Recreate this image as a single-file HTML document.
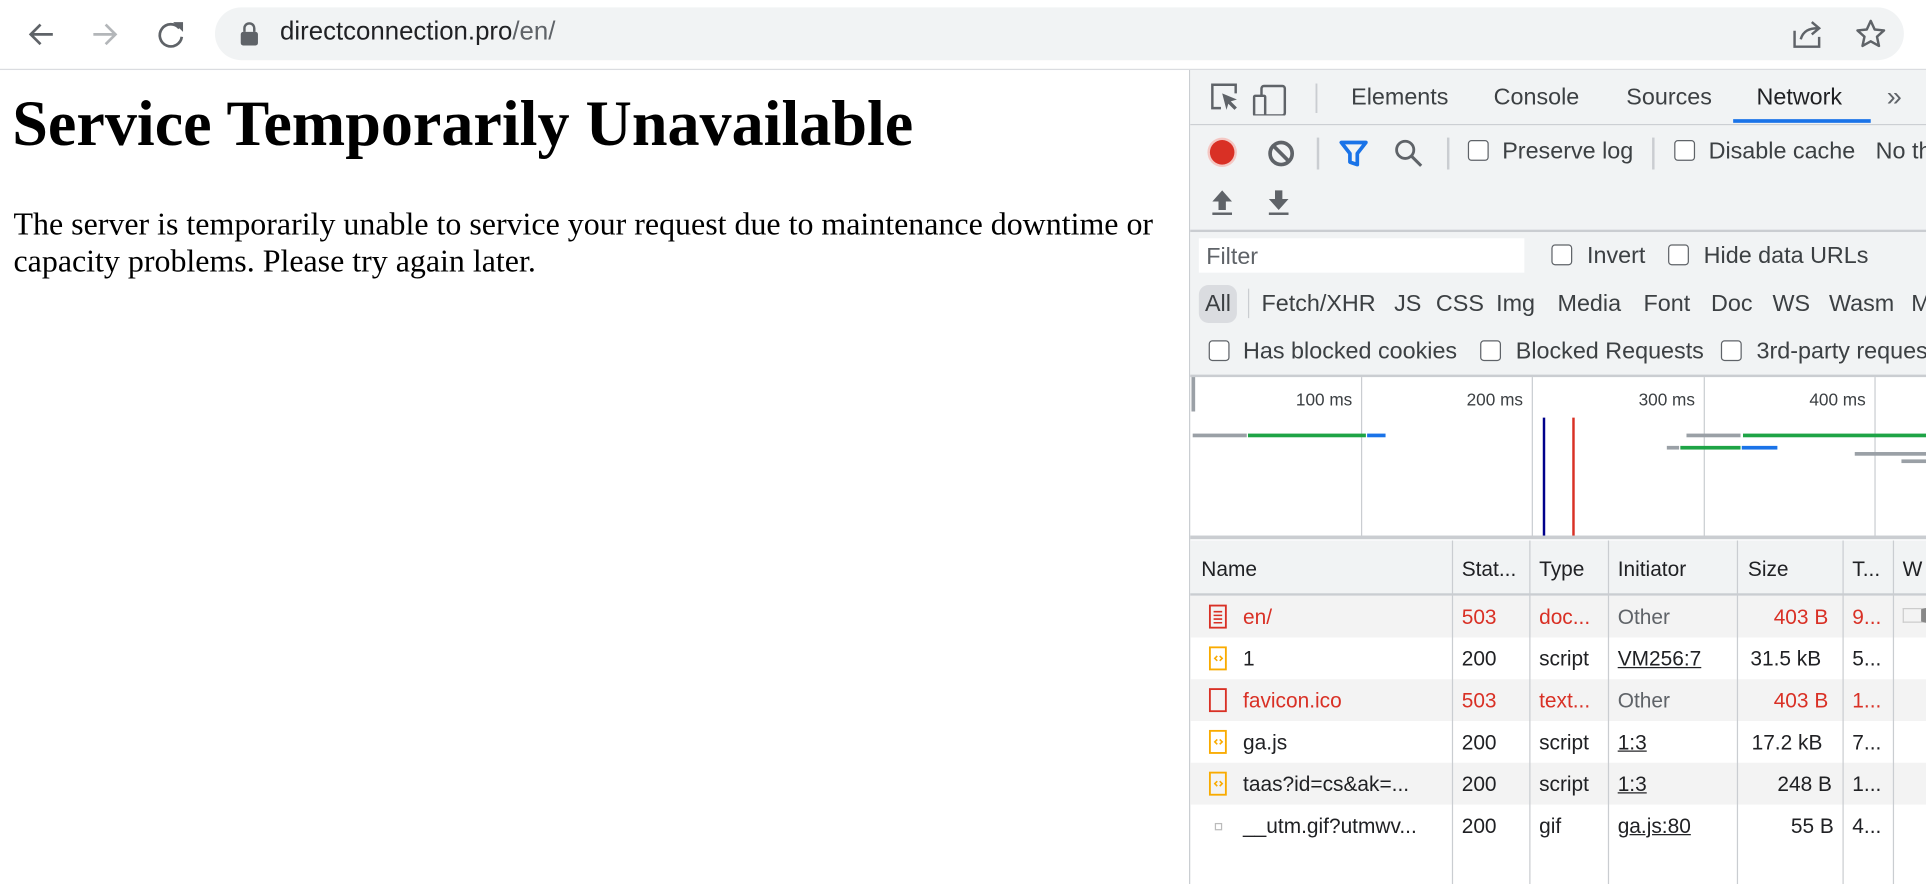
<!DOCTYPE html>
<html><head><meta charset="utf-8"><style>
html,body{margin:0;padding:0;width:1926px;height:884px;overflow:hidden;background:#fff}
#w{position:absolute;left:0;top:0;width:1568px;height:720px;transform:scale(1.22832);transform-origin:0 0;font-family:"Liberation Sans",sans-serif;color:#202124}
.a{position:absolute}
.t{position:absolute;font-size:17px;white-space:nowrap}
.b{font-size:19px}
.cb{position:absolute;width:15px;height:15px;border:1.5px solid #5f6368;border-radius:3px;background:#fff}
.red{color:#d93025}
.u{text-decoration:underline}
.vl{position:absolute;width:1px;background:#cacdd1}
</style></head><body><div id="w">
<div class="a" style="left:0;top:0;width:1568px;height:56px;background:#fff;border-bottom:1px solid #dadce0"></div>
<svg class="a" style="left:20px;top:14px" width="140" height="28" viewBox="0 0 140 28">
<path d="M23 14H5M13 6l-8 8 8 8" stroke="#5f6368" stroke-width="2.2" fill="none"/>
<path d="M56 14h18M66 6l8 8-8 8" stroke="#b3b6b9" stroke-width="2.2" fill="none"/>
<path d="M126 9a9 9 0 1 0 2 7" stroke="#5f6368" stroke-width="2.2" fill="none"/><path d="M121 4h8v8z" fill="#5f6368"/>
</svg>
<div class="a" style="left:175px;top:6px;width:1375px;height:43px;background:#f1f3f4;border-radius:22px"></div>
<svg class="a" style="left:195px;top:18px" width="16" height="20" viewBox="0 0 16 20"><rect x="1" y="8" width="14" height="11" rx="2" fill="#5f6368"/><path d="M4 8V5a4 4 0 0 1 8 0v3" stroke="#5f6368" stroke-width="2" fill="none"/></svg>
<div class="t" style="left:228px;top:14px;font-size:21px;color:#202124">directconnection.pro<span style="color:#5f6368">/en/</span></div>
<svg class="a" style="left:1458px;top:15px" width="80" height="26" viewBox="0 0 80 26">
<path d="M3 10v13h20v-8M8 17c2-7 7-9 14-9M17 3l6 5-6 5" stroke="#5f6368" stroke-width="2" fill="none"/>
<path d="M65 2l3.2 7 7.6.8-5.7 5.1 1.6 7.5L65 18.6l-6.7 3.8 1.6-7.5-5.7-5.1 7.6-.8z" stroke="#5f6368" stroke-width="2" fill="none" stroke-linejoin="round"/>
</svg>
<div class="a" style="left:10px;top:71px;font-family:'Liberation Serif',serif;font-weight:bold;font-size:52.2px;white-space:nowrap;color:#000">Service Temporarily Unavailable</div>
<div class="a" style="left:11px;top:168px;width:950px;font-family:'Liberation Serif',serif;font-size:26px;line-height:30px;color:#000">The server is temporarily unable to service your request due to maintenance downtime or capacity problems. Please try again later.</div>
<div class="a" style="left:968px;top:57px;width:600px;height:663px;background:#fff;border-left:1px solid #cacdd1"></div>
<div class="a" style="left:969px;top:57px;width:599px;height:44px;background:#f1f3f4;border-bottom:1px solid #cacdd1"></div>
<svg class="a" style="left:984px;top:66px" width="90" height="28" viewBox="0 0 90 28">
<path d="M10 22H3V3h19v7" stroke="#5f6368" stroke-width="2" fill="none"/><path d="M11 10l12 5-5 1.5 5 5-2 2-5-5-1.5 5z" fill="#5f6368"/>
<rect x="43" y="4" width="19" height="24" rx="2" stroke="#5f6368" stroke-width="2" fill="none"/><rect x="37" y="12" width="9" height="16" rx="1" stroke="#5f6368" stroke-width="2" fill="#f1f3f4"/>
<rect x="87" y="2" width="1.5" height="24" fill="#cacdd1"/></svg>
<div class="t b" style="left:1100px;top:69px;color:#3c4043">Elements</div>
<div class="t b" style="left:1216px;top:69px;color:#3c4043">Console</div>
<div class="t b" style="left:1324px;top:69px;color:#3c4043">Sources</div>
<div class="t b" style="left:1430px;top:69px;color:#202124">Network</div>
<div class="a" style="left:1411px;top:97px;width:112px;height:3px;background:#1a73e8"></div>
<div class="t" style="left:1536px;top:66px;font-size:22px;color:#5f6368">»</div>
<div class="a" style="left:969px;top:102px;width:599px;height:85px;background:#f1f3f4;border-bottom:2px solid #cacdd1"></div>
<div class="a" style="left:985px;top:114px;width:20px;height:20px;border-radius:50%;background:#d93025;box-shadow:0 0 0 2px #f4c7c3"></div>
<svg class="a" style="left:1031px;top:113px" width="24" height="24" viewBox="0 0 24 24"><circle cx="12" cy="12" r="9" stroke="#5f6368" stroke-width="3" fill="none"/><path d="M6 6l12 12" stroke="#5f6368" stroke-width="3"/></svg>
<div class="a" style="left:1072px;top:112px;width:1.5px;height:26px;background:#cacdd1"></div>
<svg class="a" style="left:1090px;top:113px" width="24" height="24" viewBox="0 0 24 24"><path d="M2 3h20l-7 9v9l-6-2v-7z" stroke="#1a73e8" stroke-width="3" fill="none" stroke-linejoin="round"/></svg>
<svg class="a" style="left:1134px;top:112px" width="26" height="26" viewBox="0 0 26 26"><circle cx="10" cy="10" r="7" stroke="#5f6368" stroke-width="2.3" fill="none"/><path d="M15 15l8 8" stroke="#5f6368" stroke-width="2.5"/></svg>
<div class="a" style="left:1178px;top:112px;width:1.5px;height:26px;background:#cacdd1"></div>
<div class="cb" style="left:1195px;top:114px"></div><div class="t b" style="left:1223px;top:113px;color:#3c4043">Preserve log</div>
<div class="a" style="left:1345px;top:112px;width:1.5px;height:26px;background:#cacdd1"></div>
<div class="cb" style="left:1363px;top:114px"></div><div class="t b" style="left:1391px;top:113px;color:#3c4043">Disable cache</div>
<div class="t b" style="left:1527px;top:113px;color:#3c4043">No th</div>
<svg class="a" style="left:985px;top:153px" width="70" height="24" viewBox="0 0 70 24"><path d="M10 2l8 9h-5v7H7v-7H2z" fill="#5f6368"/><rect x="2" y="20" width="16" height="2" fill="#5f6368"/><path d="M56 18l8-9h-5V2h-6v7h-5z" fill="#5f6368"/><rect x="48" y="20" width="16" height="2" fill="#5f6368"/></svg>
<div class="a" style="left:969px;top:189px;width:599px;height:116px;background:#f1f3f4;border-bottom:2px solid #cacdd1"></div>
<div class="a" style="left:976px;top:194px;width:265px;height:28px;background:#fff"></div>
<div class="t b" style="left:982px;top:199px;color:#5f6368">Filter</div>
<div class="cb" style="left:1263px;top:199px"></div><div class="t b" style="left:1292px;top:198px;color:#3c4043">Invert</div>
<div class="cb" style="left:1358px;top:199px"></div><div class="t b" style="left:1387px;top:198px;color:#3c4043">Hide data URLs</div>
<div class="a" style="left:976px;top:232px;width:31px;height:31px;border-radius:8px;background:#dadce0"></div>
<div class="t b" style="left:981px;top:237px;color:#3c4043">All</div>
<div class="a" style="left:1016px;top:235px;width:1px;height:24px;background:#cacdd1"></div>
<div class="t b" style="left:1027px;top:237px;color:#3c4043">Fetch/XHR</div>
<div class="t b" style="left:1135px;top:237px;color:#3c4043">JS</div>
<div class="t b" style="left:1169px;top:237px;color:#3c4043">CSS</div>
<div class="t b" style="left:1218px;top:237px;color:#3c4043">Img</div>
<div class="t b" style="left:1268px;top:237px;color:#3c4043">Media</div>
<div class="t b" style="left:1338px;top:237px;color:#3c4043">Font</div>
<div class="t b" style="left:1393px;top:237px;color:#3c4043">Doc</div>
<div class="t b" style="left:1443px;top:237px;color:#3c4043">WS</div>
<div class="t b" style="left:1489px;top:237px;color:#3c4043">Wasm</div>
<div class="t b" style="left:1556px;top:237px;color:#3c4043">M</div>
<div class="cb" style="left:984px;top:277px"></div><div class="t b" style="left:1012px;top:276px;color:#3c4043">Has blocked cookies</div>
<div class="cb" style="left:1205px;top:277px"></div><div class="t b" style="left:1234px;top:276px;color:#3c4043">Blocked Requests</div>
<div class="cb" style="left:1401px;top:277px"></div><div class="t b" style="left:1430px;top:276px;color:#3c4043">3rd-party reques</div>
<div class="a" style="left:970px;top:307px;width:3px;height:28px;background:#9aa0a6"></div>
<div class="vl" style="left:1108px;top:307px;height:130px"></div>
<div class="vl" style="left:1247px;top:307px;height:130px"></div>
<div class="vl" style="left:1387px;top:307px;height:130px"></div>
<div class="vl" style="left:1526px;top:307px;height:130px"></div>
<div class="t" style="left:1055px;top:317px;font-size:14px;color:#3c4043">100 ms</div>
<div class="t" style="left:1194px;top:317px;font-size:14px;color:#3c4043">200 ms</div>
<div class="t" style="left:1334px;top:317px;font-size:14px;color:#3c4043">300 ms</div>
<div class="t" style="left:1473px;top:317px;font-size:14px;color:#3c4043">400 ms</div>
<div class="a" style="left:971px;top:353px;width:44px;height:3px;background:#9aa0a6"></div>
<div class="a" style="left:1016px;top:353px;width:96px;height:3px;background:#1ea446"></div>
<div class="a" style="left:1113px;top:353px;width:15px;height:3px;background:#1a73e8"></div>
<div class="a" style="left:1256px;top:340px;width:1.5px;height:98px;background:#00008b"></div>
<div class="a" style="left:1280px;top:340px;width:1.5px;height:98px;background:#d93025"></div>
<div class="a" style="left:1373px;top:353px;width:44px;height:3px;background:#9aa0a6"></div>
<div class="a" style="left:1419px;top:353px;width:149px;height:3px;background:#1ea446"></div>
<div class="a" style="left:1357px;top:363px;width:10px;height:3px;background:#9aa0a6"></div>
<div class="a" style="left:1368px;top:363px;width:49px;height:3px;background:#1ea446"></div>
<div class="a" style="left:1418px;top:363px;width:29px;height:3px;background:#1a73e8"></div>
<div class="a" style="left:1510px;top:368px;width:58px;height:3px;background:#9aa0a6"></div>
<div class="a" style="left:1548px;top:374px;width:20px;height:3px;background:#9aa0a6"></div>
<div class="a" style="left:969px;top:436px;width:599px;height:3px;background:#cacdd1"></div>
<div class="a" style="left:969px;top:440px;width:599px;height:43px;background:#f1f3f4;border-bottom:2px solid #cacdd1"></div>
<div class="a" style="left:969px;top:485px;width:599px;height:34px;background:#f3f3f3"></div>
<div class="a" style="left:969px;top:553px;width:599px;height:34px;background:#f3f3f3"></div>
<div class="a" style="left:969px;top:621px;width:599px;height:34px;background:#f3f3f3"></div>
<div class="vl" style="left:1182px;top:440px;height:280px"></div>
<div class="vl" style="left:1245px;top:440px;height:280px"></div>
<div class="vl" style="left:1309px;top:440px;height:280px"></div>
<div class="vl" style="left:1414px;top:440px;height:280px"></div>
<div class="vl" style="left:1500px;top:440px;height:280px"></div>
<div class="vl" style="left:1541px;top:440px;height:280px"></div>
<div class="t" style="left:978px;top:454px">Name</div>
<div class="t" style="left:1190px;top:454px">Stat...</div>
<div class="t" style="left:1253px;top:454px">Type</div>
<div class="t" style="left:1317px;top:454px">Initiator</div>
<div class="t" style="left:1423px;top:454px">Size</div>
<div class="t" style="left:1508px;top:454px">T...</div>
<div class="t" style="left:1549px;top:454px">W</div>
<svg class="a" style="left:984px;top:492px" width="16" height="20" viewBox="0 0 16 20"><rect x="1" y="1" width="13" height="18" stroke="#d93025" stroke-width="1.5" fill="none"/><path d="M4 6h7M4 9h7M4 12h7M4 15h7" stroke="#d93025" stroke-width="1.3"/></svg>
<svg class="a" style="left:984px;top:526px" width="16" height="20" viewBox="0 0 16 20"><rect x="1" y="1" width="13" height="18" stroke="#f9ab00" stroke-width="1.5" fill="none"/><path d="M7 8l-2 2 2 2M9 8l2 2-2 2" stroke="#f9ab00" stroke-width="1.3" fill="none"/></svg>
<svg class="a" style="left:984px;top:560px" width="16" height="20" viewBox="0 0 16 20"><rect x="1" y="1" width="13" height="18" stroke="#d93025" stroke-width="1.5" fill="none"/></svg>
<svg class="a" style="left:984px;top:594px" width="16" height="20" viewBox="0 0 16 20"><rect x="1" y="1" width="13" height="18" stroke="#f9ab00" stroke-width="1.5" fill="none"/><path d="M7 8l-2 2 2 2M9 8l2 2-2 2" stroke="#f9ab00" stroke-width="1.3" fill="none"/></svg>
<svg class="a" style="left:984px;top:628px" width="16" height="20" viewBox="0 0 16 20"><rect x="1" y="1" width="13" height="18" stroke="#f9ab00" stroke-width="1.5" fill="none"/><path d="M7 8l-2 2 2 2M9 8l2 2-2 2" stroke="#f9ab00" stroke-width="1.3" fill="none"/></svg>
<div class="a" style="left:989px;top:670px;width:4px;height:4px;border:1px solid #bbb"></div>
<div class="a" style="left:1549px;top:495px;width:14px;height:10px;border:1px solid #ccc;border-right:4px solid #888"></div>
<div class="t red" style="left:1012px;top:493px">en/</div><div class="t red" style="left:1190px;top:493px">503</div><div class="t red" style="left:1253px;top:493px">doc...</div><div class="t" style="left:1317px;top:493px;color:#5f6368">Other</div><div class="t red" style="left:1444px;top:493px">403 B</div><div class="t red" style="left:1508px;top:493px">9...</div>
<div class="t" style="left:1012px;top:527px">1</div><div class="t" style="left:1190px;top:527px">200</div><div class="t" style="left:1253px;top:527px">script</div><div class="t u" style="left:1317px;top:527px">VM256:7</div><div class="t" style="left:1425px;top:527px">31.5 kB</div><div class="t" style="left:1508px;top:527px">5...</div>
<div class="t red" style="left:1012px;top:561px">favicon.ico</div><div class="t red" style="left:1190px;top:561px">503</div><div class="t red" style="left:1253px;top:561px">text...</div><div class="t" style="left:1317px;top:561px;color:#5f6368">Other</div><div class="t red" style="left:1444px;top:561px">403 B</div><div class="t red" style="left:1508px;top:561px">1...</div>
<div class="t" style="left:1012px;top:595px">ga.js</div><div class="t" style="left:1190px;top:595px">200</div><div class="t" style="left:1253px;top:595px">script</div><div class="t u" style="left:1317px;top:595px">1:3</div><div class="t" style="left:1426px;top:595px">17.2 kB</div><div class="t" style="left:1508px;top:595px">7...</div>
<div class="t" style="left:1012px;top:629px">taas?id=cs&amp;ak=...</div><div class="t" style="left:1190px;top:629px">200</div><div class="t" style="left:1253px;top:629px">script</div><div class="t u" style="left:1317px;top:629px">1:3</div><div class="t" style="left:1447px;top:629px">248 B</div><div class="t" style="left:1508px;top:629px">1...</div>
<div class="t" style="left:1012px;top:663px">__utm.gif?utmwv...</div><div class="t" style="left:1190px;top:663px">200</div><div class="t" style="left:1253px;top:663px">gif</div><div class="t u" style="left:1317px;top:663px">ga.js:80</div><div class="t" style="left:1458px;top:663px">55 B</div><div class="t" style="left:1508px;top:663px">4...</div>
</div></body></html>
